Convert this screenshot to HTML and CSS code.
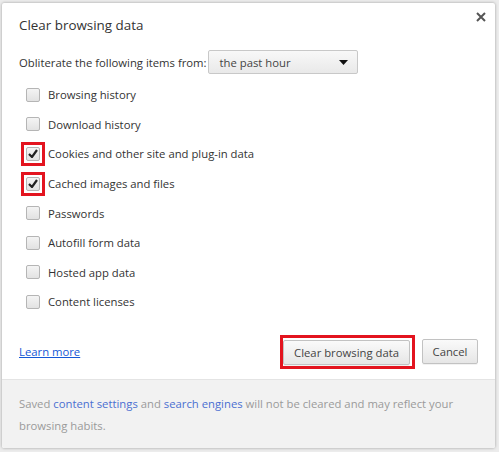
FILE: index.html
```html
<!DOCTYPE html>
<html>
<head>
<meta charset="utf-8">
<link rel="stylesheet" href="styles.css">
</head>
<body>
<div class="dialog">
  <div class="main">
    <div class="header">
      <h1 class="title">Clear browsing data</h1>
      <span class="close">
        <svg width="10" height="10" viewBox="0 0 10 10"><path d="M1 1 L9 9 M9 1 L1 9" stroke="#555" stroke-width="2"/></svg>
      </span>
    </div>
    <div class="period">
      <span class="period-label">Obliterate the following items from:</span>
      <span class="select">
        <span class="select-text">the past hour</span>
        <svg class="caret" width="9" height="5" viewBox="0 0 9 5"><path d="M0 0 H9 L4.5 5 Z" fill="#111"/></svg>
      </span>
    </div>
    <ul class="items">
      <li class="item"><span class="cb"></span><span>Browsing history</span></li>
      <li class="item"><span class="cb"></span><span>Download history</span></li>
      <li class="item"><span class="mark"><span class="cb checked"><svg width="10" height="9" viewBox="0 0 10 9"><path d="M1 5 L4 8 L9 1" stroke="#222" stroke-width="2.2" fill="none"/></svg></span></span><span>Cookies and other site and plug-in data</span></li>
      <li class="item"><span class="mark"><span class="cb checked"><svg width="10" height="9" viewBox="0 0 10 9"><path d="M1 5 L4 8 L9 1" stroke="#222" stroke-width="2.2" fill="none"/></svg></span></span><span>Cached images and files</span></li>
      <li class="item"><span class="cb"></span><span>Passwords</span></li>
      <li class="item"><span class="cb"></span><span>Autofill form data</span></li>
      <li class="item"><span class="cb"></span><span>Hosted app data</span></li>
      <li class="item"><span class="cb"></span><span>Content licenses</span></li>
    </ul>
    <div class="actions">
      <a class="learn" href="#">Learn more</a>
      <div class="buttons">
        <span class="highlight"><button class="btn">Clear browsing data</button></span>
        <button class="btn cancel">Cancel</button>
      </div>
    </div>
  </div>
  <div class="footer">
    Saved <a href="#">content settings</a> and <a href="#">search engines</a> will not be cleared and may reflect your browsing habits.
  </div>
</div>
</body>
</html>
```
FILE: styles.css
```css
html, body {
  margin: 0;
  padding: 0;
}
body {
  background: #ececec;
  width: 499px;
  height: 452px;
  padding: 3px 4px 4px 2px;
  box-sizing: border-box;
  font-family: "Open Sans", "Noto Sans", sans-serif;
  font-size: 11.3px;
  color: #333;
}
.dialog {
  width: 493px;
  height: 445px;
  background: #fff;
  box-shadow: 0 0 3px rgba(0,0,0,0.35);
  border-radius: 2px;
  display: flex;
  flex-direction: column;
  overflow: hidden;
}
.main {
  padding: 12px 17px 0 17px;
  flex: 1;
  display: flex;
  flex-direction: column;
}
.header {
  display: flex;
  justify-content: space-between;
  align-items: flex-start;
  height: 20px;
}
.title {
  margin: 0;
  font-size: 13.4px;
  font-weight: normal;
  line-height: 20px;
  color: #333;
}
.close {
  margin-top: -3px;
  margin-right: -8px;
  display: flex;
}
.period {
  margin-top: 15px;
  display: flex;
  align-items: center;
  height: 24px;
}
.period-label {
  margin-right: 1px;
}
.select {
  width: 150px;
  height: 24px;
  box-sizing: border-box;
  border: 1px solid #c8c8c8;
  border-radius: 2px;
  background: linear-gradient(#f8f8f8, #e9e9e9);
  display: flex;
  align-items: center;
  justify-content: space-between;
  padding: 0 9px 0 11px;
  color: #444;
}
.items {
  list-style: none;
  margin: 6px 0 0 0;
  padding: 0;
}
.item {
  height: 29.6px;
  display: flex;
  align-items: center;
  padding-left: 7px;
}
.cb {
  width: 14px;
  height: 14px;
  box-sizing: border-box;
  border: 1px solid #b5b5b5;
  border-radius: 2px;
  background: linear-gradient(#f4f4f4, #e2e2e2);
  margin-right: 8px;
  display: flex;
  align-items: center;
  justify-content: center;
}
.mark {
  display: flex;
  margin-right: 8px;
  outline: 3px solid #e3141f;
  outline-offset: 2px;
}
.mark .cb {
  margin-right: 0;
}
.actions {
  margin-top: 18px;
  display: flex;
  align-items: center;
  justify-content: space-between;
  height: 34px;
}
.learn {
  color: #1558d6;
  text-decoration: underline;
}
.buttons {
  display: flex;
  align-items: center;
  gap: 7px;
}
.highlight {
  border: 3px solid #e3141f;
  padding: 2px 2px 1px 0;
  display: flex;
}
.btn {
  font-family: inherit;
  font-size: 11.3px;
  color: #444;
  height: 25px;
  padding: 0 10px;
  border: 1px solid #c2c2c2;
  border-radius: 2px;
  background: linear-gradient(#fafafa, #e6e6e6);
  box-shadow: 0 1px 0 rgba(0,0,0,0.05);
}
.cancel {
  width: 56px;
  padding: 0;
}
.footer {
  background: #f2f2f2;
  border-top: 1px solid #e4e4e4;
  padding: 13px 17px 11px 17px;
  line-height: 22px;
  color: #9a9a9a;
  height: 69px;
  box-sizing: border-box;
}
.footer a {
  color: #4a6fd1;
  text-decoration: none;
}
```
